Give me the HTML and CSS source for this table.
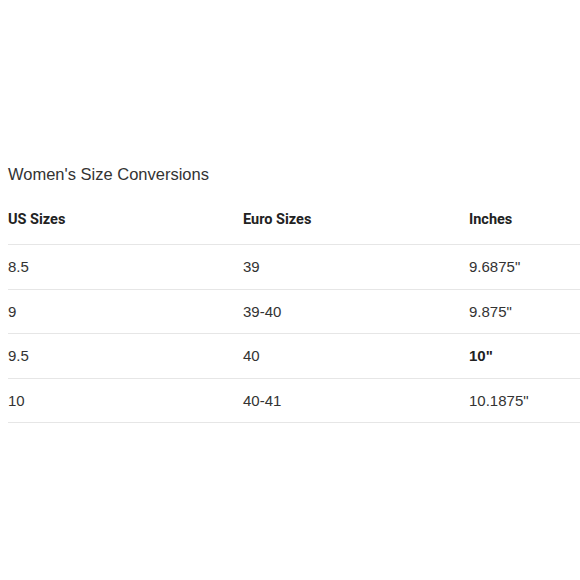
FILE: index.html
```html
<!DOCTYPE html>
<html>
<head>
<meta charset="utf-8">
<link rel="stylesheet" href="styles.css">
</head>
<body>
<div class="page">
  <h2 class="title">Women's Size Conversions</h2>
  <div class="table">
    <div class="row head">
      <div class="c c1">US Sizes</div>
      <div class="c c2">Euro Sizes</div>
      <div class="c c3">Inches</div>
    </div>
    <div class="row">
      <div class="c c1">8.5</div>
      <div class="c c2">39</div>
      <div class="c c3">9.6875"</div>
    </div>
    <div class="row">
      <div class="c c1">9</div>
      <div class="c c2">39-40</div>
      <div class="c c3">9.875"</div>
    </div>
    <div class="row">
      <div class="c c1">9.5</div>
      <div class="c c2">40</div>
      <div class="c c3"><b class="strong">10"</b></div>
    </div>
    <div class="row">
      <div class="c c1">10</div>
      <div class="c c2">40-41</div>
      <div class="c c3">10.1875"</div>
    </div>
  </div>
</div>
</body>
</html>
```
FILE: styles.css
```css
html, body {
  margin: 0;
  padding: 0;
  background: #ffffff;
}
.page {
  padding: 162px 0 0 8px;
  font-family: "Liberation Sans", Arial, sans-serif;
  color: #333333;
}
.title {
  margin: 0;
  font-size: 16.5px;
  font-weight: normal;
  line-height: 24px;
  color: #333333;
}
.table {
  margin-top: 6px;
  width: 572px;
}
.row {
  display: grid;
  grid-template-columns: 235px 226px 1fr;
  align-items: center;
  height: 43.5px;
  border-bottom: 1px solid #e6e6e6;
  font-size: 15px;
}
.row.head {
  height: 53px;
  padding-top: 3px;
  box-sizing: border-box;
  font-family: Roboto, "Liberation Sans", sans-serif;
  font-weight: bold;
  font-size: 14.5px;
  color: #222222;
}
.strong {
  font-weight: bold;
  color: #222222;
}
```
